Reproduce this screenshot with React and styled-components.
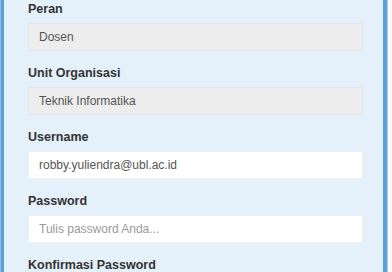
import React from 'react';
import styled, { createGlobalStyle } from 'styled-components';

const GlobalStyle = createGlobalStyle`
  html, body {
    margin: 0;
    padding: 0;
    background: #f7fbfe;
  }
  body {
    width: 392px;
    height: 272px;
    overflow: hidden;
    font-family: "Liberation Sans", Arial, sans-serif;
  }
`;

const Page = styled.div`
  width: 392px;
  height: 272px;
  padding-right: 4px;
  box-sizing: border-box;
  overflow: hidden;
`;

const Panel = styled.div`
  height: 100%;
  box-sizing: border-box;
  overflow: hidden;
  background: #e4f1fb;
  border-left: 1px solid #8fc0e6;
  border-right: 1px solid #a9cfec;
  box-shadow: inset 3px 0 0 #5a9fd6, inset -4px 0 0 #5a9fd6;
  padding: 0 24px 0 27px;
`;

const Form = styled.form`
  display: flex;
  flex-direction: column;
`;

const Group = styled.div`
  display: flex;
  flex-direction: column;
  margin-bottom: 13px;
`;

const Label = styled.label`
  font-size: 12.5px;
  font-weight: bold;
  color: #333;
  line-height: 18px;
  margin-bottom: 5px;
`;

const Input = styled.input`
  height: 28px;
  box-sizing: border-box;
  width: 100%;
  border: 1px solid ${(p) => (p.disabled ? '#e9e6e8' : '#edf1f4')};
  border-radius: 1px;
  background: ${(p) => (p.disabled ? '#eeeded' : '#ffffff')};
  padding: 0 10px;
  font-family: "Liberation Sans", Arial, sans-serif;
  font-size: 12px;
  color: #555;
  outline: none;
  &::placeholder {
    color: #9a9a9a;
  }
  &:disabled {
    color: #555;
    -webkit-text-fill-color: #555;
  }
`;

const fields = [
  { label: 'Peran', value: 'Dosen', disabled: true },
  { label: 'Unit Organisasi', value: 'Teknik Informatika', disabled: true },
  { label: 'Username', value: 'robby.yuliendra@ubl.ac.id' },
  { label: 'Password', placeholder: 'Tulis password Anda...', type: 'password' },
  { label: 'Konfirmasi Password', placeholder: 'Ulangi password Anda...', type: 'password' },
];

const App = () => (
  <Page>
    <GlobalStyle />
    <Panel>
      <Form onSubmit={(e) => e.preventDefault()}>
        {fields.map((f) => (
          <Group key={f.label}>
            <Label>{f.label}</Label>
            <Input
              type={f.type || 'text'}
              defaultValue={f.value}
              placeholder={f.placeholder}
              disabled={f.disabled}
              readOnly={!f.disabled && !!f.value}
            />
          </Group>
        ))}
      </Form>
    </Panel>
  </Page>
);

export default App;
